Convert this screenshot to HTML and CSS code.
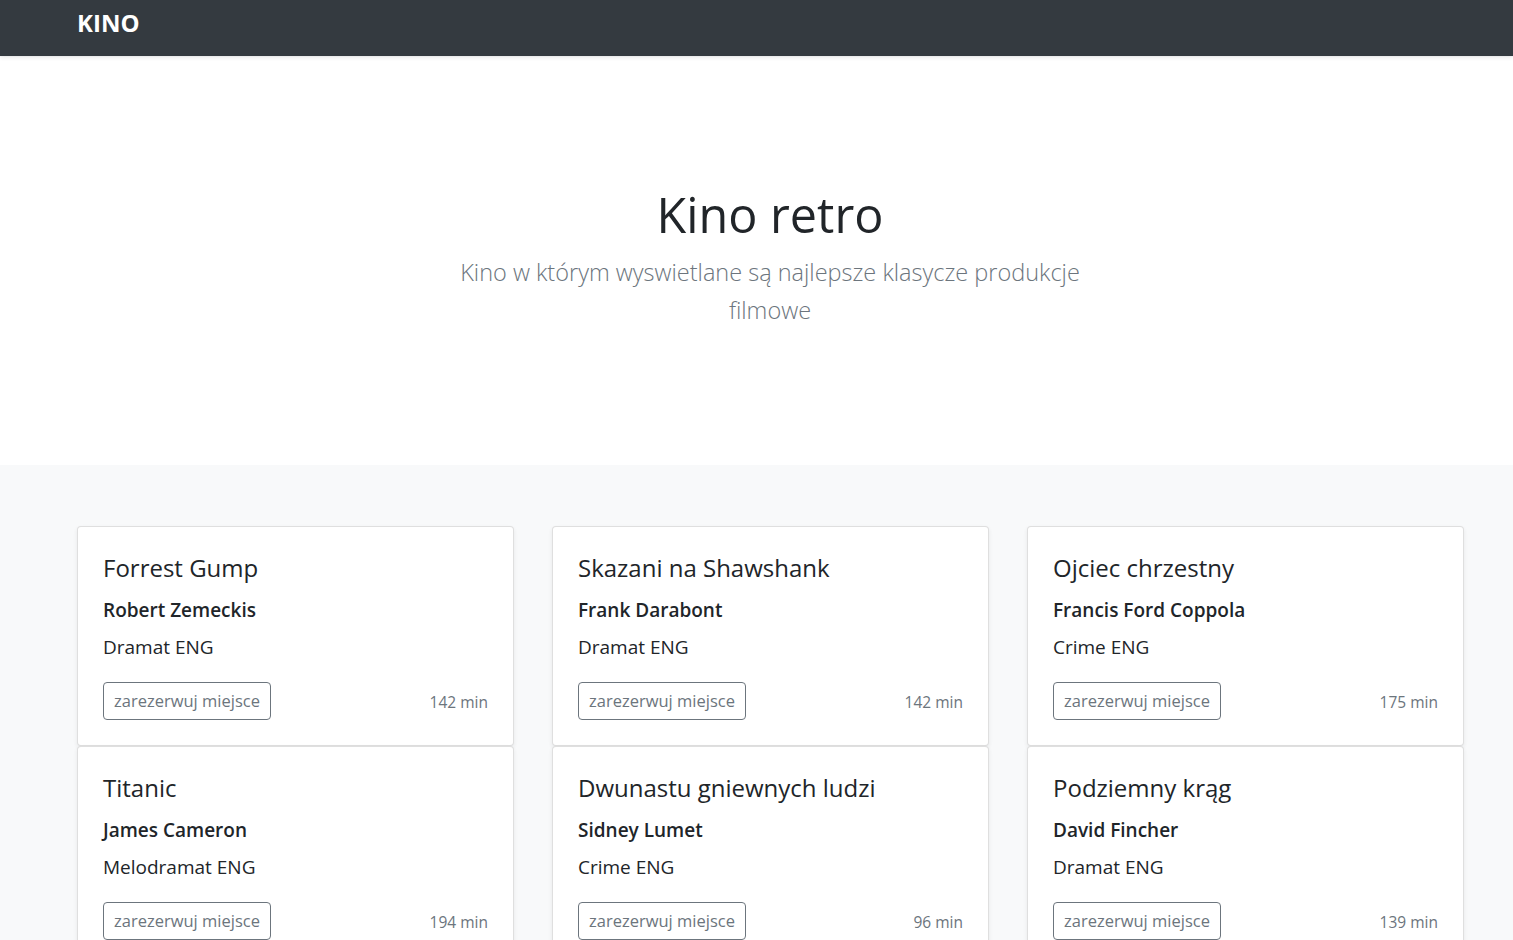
FILE: index.html
```html
<!DOCTYPE html>
<html lang="pl">
<head>
<meta charset="utf-8">
<title>Kino retro</title>
<link rel="stylesheet" href="styles.css">
</head>
<body>
<header class="navbar">
  <div class="container">
    <a class="brand" href="#">KINO</a>
  </div>
</header>
<main>
  <section class="hero">
    <div class="container hero-inner">
      <h1 class="hero-title">Kino retro</h1>
      <p class="hero-lead">Kino w którym wyswietlane są najlepsze klasycze produkcje filmowe</p>
    </div>
  </section>
  <section class="album">
    <div class="container grid">
      <div class="card">
        <h5 class="card-title">Forrest Gump</h5>
        <h6 class="card-director">Robert Zemeckis</h6>
        <p class="card-text">Dramat ENG</p>
        <div class="card-foot"><button class="btn">zarezerwuj miejsce</button><small class="dur">142 min</small></div>
      </div>
      <div class="card">
        <h5 class="card-title">Skazani na Shawshank</h5>
        <h6 class="card-director">Frank Darabont</h6>
        <p class="card-text">Dramat ENG</p>
        <div class="card-foot"><button class="btn">zarezerwuj miejsce</button><small class="dur">142 min</small></div>
      </div>
      <div class="card">
        <h5 class="card-title">Ojciec chrzestny</h5>
        <h6 class="card-director">Francis Ford Coppola</h6>
        <p class="card-text">Crime ENG</p>
        <div class="card-foot"><button class="btn">zarezerwuj miejsce</button><small class="dur">175 min</small></div>
      </div>
      <div class="card">
        <h5 class="card-title">Titanic</h5>
        <h6 class="card-director">James Cameron</h6>
        <p class="card-text">Melodramat ENG</p>
        <div class="card-foot"><button class="btn">zarezerwuj miejsce</button><small class="dur">194 min</small></div>
      </div>
      <div class="card">
        <h5 class="card-title">Dwunastu gniewnych ludzi</h5>
        <h6 class="card-director">Sidney Lumet</h6>
        <p class="card-text">Crime ENG</p>
        <div class="card-foot"><button class="btn">zarezerwuj miejsce</button><small class="dur">96 min</small></div>
      </div>
      <div class="card">
        <h5 class="card-title">Podziemny krąg</h5>
        <h6 class="card-director">David Fincher</h6>
        <p class="card-text">Dramat ENG</p>
        <div class="card-foot"><button class="btn">zarezerwuj miejsce</button><small class="dur">139 min</small></div>
      </div>
    </div>
  </section>
</main>
</body>
</html>
```
FILE: styles.css
```css
* { box-sizing: border-box; }
html, body { margin: 0; padding: 0; }
body {
  font-family: "Open Sans", "Noto Sans", "Liberation Sans", sans-serif;
  font-size: 19px;
  line-height: 1.5;
  color: #212529;
  background: #f8f9fa;
}
.container {
  margin-left: 77px;
  width: 1386px;
}
.navbar {
  height: 56px;
  background: #343a40;
  box-shadow: 0 2px 4px rgba(0,0,0,.075);
  position: relative;
  z-index: 1;
}
.navbar .container {
  display: flex;
  align-items: center;
  height: 56px;
  padding-bottom: 11px;
}
.brand {
  color: #fff;
  font-weight: 700;
  font-size: 24px;
  line-height: 1;
  text-decoration: none;
}
.hero {
  background: #fff;
  padding: 128px 0 0;
  text-align: center;
  height: 408px;
  margin-top: 1px;
}
.hero-title {
  margin: 0 0 11px;
  font-size: 48.5px;
  font-weight: 400;
  line-height: 1.2;
}
.hero-lead {
  margin: 0 auto;
  max-width: 660px;
  font-size: 23.5px;
  font-weight: 300;
  line-height: 37.5px;
  color: #6c757d;
}
.album {
  padding-top: 61px;
}
.grid {
  display: grid;
  grid-template-columns: repeat(3, 437px);
  column-gap: 38px;
  row-gap: 0;
}
.card {
  height: 220px;
  background: #fff;
  border: 1px solid rgba(0,0,0,.125);
  border-radius: 4px;
  box-shadow: 0 2px 4px rgba(0,0,0,.075);
  padding: 26px 25px 24px;
}
.card-title {
  margin: 0 0 15px;
  font-size: 24px;
  font-weight: 400;
  line-height: 30px;
}
.card-director {
  margin: 0 0 10px;
  font-size: 19px;
  font-weight: 600;
  line-height: 24px;
}
.card-text {
  margin: 0 0 20px;
  font-size: 19px;
  line-height: 30px;
}
.card-foot {
  display: flex;
  justify-content: space-between;
  align-items: center;
}
.btn {
  font-family: inherit;
  font-size: 16.5px;
  line-height: 26px;
  padding: 5px 10px;
  color: #6c757d;
  background: transparent;
  border: 1px solid #6c757d;
  border-radius: 4px;
  height: 38px;
}
.dur {
  font-size: 15.5px;
  color: #6c757d;
  padding-top: 3px;
}
```
